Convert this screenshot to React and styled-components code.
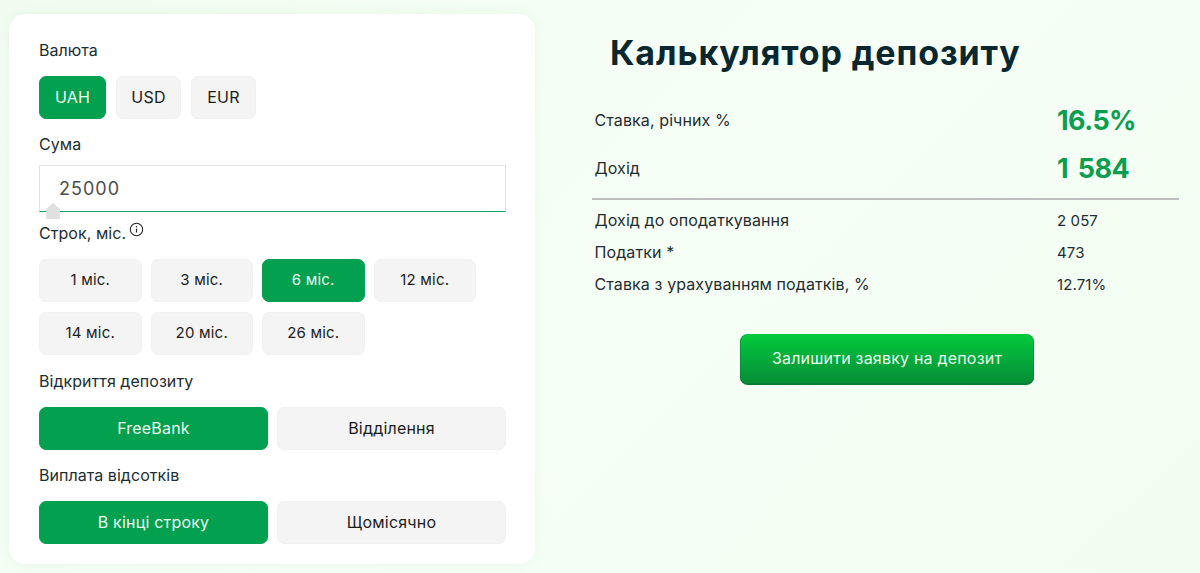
import React from "react";
import styled, { createGlobalStyle } from "styled-components";

const Global = createGlobalStyle`
  html, body { margin: 0; padding: 0; }
  body {
    font-family: "Inter", "Noto Sans", "Liberation Sans", sans-serif;
    color: #1b2b30;
    background: #f3fef3;
  }
`;

const Page = styled.div`
  width: 1200px;
  height: 573px;
  overflow: hidden;
  display: flex;
  align-items: flex-start;
  background: linear-gradient(135deg, #f1fcf1 0%, #f6fff6 50%, #f1fdf1 100%);
`;

const Card = styled.section`
  box-sizing: border-box;
  width: 526px;
  height: 550px;
  margin: 14px 0 0 9px;
  padding: 24px 29px 20px 30px;
  background: #fff;
  border-radius: 16px;
  box-shadow: 0 0 12px rgba(120, 190, 130, 0.12);
`;

const Group = styled.div`
  margin-bottom: ${(p) => p.$after ?? 13}px;
`;

const Label = styled.div`
  display: flex;
  align-items: center;
  height: 24px;
  margin-bottom: ${(p) => p.$gap ?? 14}px;
  font-size: 16px;
  letter-spacing: 0.05px;
  color: #202e33;
`;

const Row = styled.div`
  display: grid;
  grid-template-columns: ${(p) => p.$columns};
  gap: ${(p) => p.$rowGap ?? 0}px ${(p) => p.$colGap}px;
`;

const Choice = styled.button`
  height: 43px;
  padding: 0 0 2px;
  border: 1px solid ${(p) => (p.$active ? "#03a04f" : "#f1f1f1")};
  border-radius: 7px;
  background: ${(p) => (p.$active ? "#03a04f" : "#f4f4f4")};
  color: ${(p) => (p.$active ? "#e9f9ef" : "#1c1c1c")};
  font-family: inherit;
  font-size: ${(p) => p.$size ?? 16}px;
  letter-spacing: 0.2px;
`;

const AmountField = styled.div`
  position: relative;
  box-sizing: border-box;
  height: 47px;
  margin-bottom: 9px;
  padding-left: 19px;
  display: flex;
  align-items: center;
  border: 1px solid #e3e3e3;
  border-bottom: 1px solid #0fa55f;
  font-size: 18px;
  letter-spacing: 1px;
  color: #4d4d4d;
`;

const Thumb = styled.span`
  position: absolute;
  left: 6px;
  top: 37px;
  width: 14px;
  height: 16px;
  background: #e0e0e0;
  clip-path: polygon(50% 0, 100% 38%, 100% 100%, 0 100%, 0 38%);
`;

const InfoIcon = styled.svg`
  width: 15px;
  height: 15px;
  margin: -8px 0 0 3px;
  color: #222;
`;

const Results = styled.section`
  box-sizing: border-box;
  width: 587px;
  margin-left: 57px;
  padding-top: 31px;
`;

const Title = styled.h1`
  margin: 0 0 21px 18px;
  height: 44px;
  line-height: 44px;
  font-size: 34px;
  font-weight: 700;
  letter-spacing: 0.9px;
  color: #0a2730;
`;

const Line = styled.div`
  display: grid;
  grid-template-columns: 462.5px 1fr;
  align-items: center;
  height: ${(p) => p.$height}px;
  padding-left: 2.5px;
  font-size: 16px;
  letter-spacing: 0.1px;
  color: #1e2d32;
`;

const SmallValue = styled.span`
  font-size: 15px;
`;

const BigValue = styled.span`
  font-size: 27px;
  font-weight: 700;
  letter-spacing: -0.6px;
  word-spacing: 4px;
  color: #0b9d50;
`;

const Divider = styled.hr`
  margin: 6px 0 4px;
  border: 0;
  border-top: 2px solid #bdbdbd;
`;

const Cta = styled.button`
  display: block;
  box-sizing: border-box;
  width: 294px;
  height: 51px;
  margin: 34px 0 0 148px;
  padding: 0 0 2px;
  border: 0;
  border-bottom: 1px solid #067a35;
  border-radius: 8px;
  box-shadow: inset 0 -1px 0 #077f35, inset 1px 0 0 rgba(6, 122, 53, 0.5), inset -1px 0 0 rgba(6, 122, 53, 0.5);
  background: linear-gradient(180deg, #03ca3d 0%, #078c38 100%);
  color: #e6fbea;
  font-family: inherit;
  font-size: 16px;
  letter-spacing: 0.2px;
`;

const currencies = [["UAH", true], ["USD"], ["EUR"]];
const terms = ["1 міс.", "3 міс.", "6 міс.", "12 міс.", "14 міс.", "20 міс.", "26 міс."];

export default function App() {
  return (
    <Page>
      <Global />
      <Card>
        <Group>
          <Label>Валюта</Label>
          <Row $columns="67px 65px 65px" $colGap={10}>
            {currencies.map(([c, a]) => (
              <Choice key={c} $active={a}>{c}</Choice>
            ))}
          </Row>
        </Group>
        <Label $gap={9}>Сума</Label>
        <AmountField>
          25000
          <Thumb />
        </AmountField>
        <Group $after={14}>
          <Label>
            Строк, міс.
            <InfoIcon viewBox="0 0 16 16" fill="none" stroke="currentColor">
              <circle cx="8" cy="8" r="6.6" strokeWidth="1.1" />
              <path d="M8 7.2v4" strokeWidth="1.3" />
              <path d="M8 4.4v1.3" strokeWidth="1.3" />
            </InfoIcon>
          </Label>
          <Row $columns="repeat(4, 102.5px)" $colGap={9} $rowGap={10}>
            {terms.map((t) => (
              <Choice key={t} $size={15} $active={t === "6 міс."}>{t}</Choice>
            ))}
          </Row>
        </Group>
        <Group>
          <Label>Відкриття депозиту</Label>
          <Row $columns="229px 229px" $colGap={9}>
            <Choice $active>FreeBank</Choice>
            <Choice>Відділення</Choice>
          </Row>
        </Group>
        <Label>Виплата відсотків</Label>
        <Row $columns="229px 229px" $colGap={9}>
          <Choice $active>В кінці строку</Choice>
          <Choice>Щомісячно</Choice>
        </Row>
      </Card>
      <Results>
        <Title>Калькулятор депозиту</Title>
        <Line $height={48}>
          <span>Ставка, річних %</span>
          <BigValue>16.5%</BigValue>
        </Line>
        <Line $height={48}>
          <span>Дохід</span>
          <BigValue>1 584</BigValue>
        </Line>
        <Divider />
        <Line $height={32}>
          <span>Дохід до оподаткування</span>
          <SmallValue>2 057</SmallValue>
        </Line>
        <Line $height={32}>
          <span>Податки *</span>
          <SmallValue>473</SmallValue>
        </Line>
        <Line $height={32}>
          <span>Ставка з урахуванням податків, %</span>
          <SmallValue>12.71%</SmallValue>
        </Line>
        <Cta>Залишити заявку на депозит</Cta>
      </Results>
    </Page>
  );
}
